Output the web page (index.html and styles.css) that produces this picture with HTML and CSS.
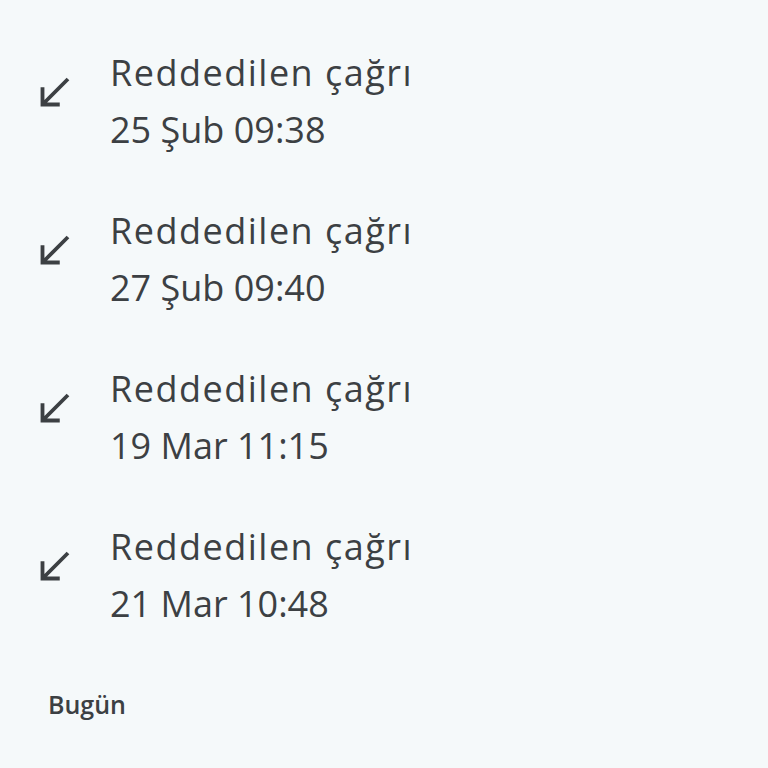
FILE: index.html
```html
<!DOCTYPE html>
<html lang="tr">
<head>
  <meta charset="UTF-8" />
  <meta name="viewport" content="width=device-width, initial-scale=1.0" />
  <title>Arama geçmişi</title>
  <link rel="stylesheet" href="styles.css">
</head>
<body>
  <main class="call-list">
    <div class="call-row">
      <svg class="call-icon" viewBox="0 0 24 24"><path d="M20 5.41L18.59 4 7 15.59V9H5v10h10v-2H8.41z"/></svg>
      <div class="call-text">
        <div class="call-title">Reddedilen çağrı</div>
        <div class="call-time">25 Şub 09:38</div>
      </div>
    </div>
    <div class="call-row">
      <svg class="call-icon" viewBox="0 0 24 24"><path d="M20 5.41L18.59 4 7 15.59V9H5v10h10v-2H8.41z"/></svg>
      <div class="call-text">
        <div class="call-title">Reddedilen çağrı</div>
        <div class="call-time">27 Şub 09:40</div>
      </div>
    </div>
    <div class="call-row">
      <svg class="call-icon" viewBox="0 0 24 24"><path d="M20 5.41L18.59 4 7 15.59V9H5v10h10v-2H8.41z"/></svg>
      <div class="call-text">
        <div class="call-title">Reddedilen çağrı</div>
        <div class="call-time">19 Mar 11:15</div>
      </div>
    </div>
    <div class="call-row">
      <svg class="call-icon" viewBox="0 0 24 24"><path d="M20 5.41L18.59 4 7 15.59V9H5v10h10v-2H8.41z"/></svg>
      <div class="call-text">
        <div class="call-title">Reddedilen çağrı</div>
        <div class="call-time">21 Mar 10:48</div>
      </div>
    </div>

    <h3 class="section-head">Bugün</h3>
  </main>
</body>
</html>
```

FILE: styles.css
```css
body {
  margin: 0;
  padding: 0;
  background: #f5f9fa;
  font-family: "Open Sans", Roboto, sans-serif;
  color: #3c4043;
}

.call-list {
  display: flex;
  flex-direction: column;
  min-height: 100vh;
}

.call-row {
  display: flex;
  align-items: flex-start;
  padding: 44px 0 0 31px;
}

.call-icon {
  width: 46px;
  height: 46px;
  margin-top: 26px;
  margin-right: 33px;
  fill: #3c4043;
  flex-shrink: 0;
}

.call-text {
  display: flex;
  flex-direction: column;
}

.call-title,
.call-time {
  font-size: 36px;
  line-height: 57px;
  white-space: nowrap;
}

.call-title {
  letter-spacing: 1.5px;
}

.section-head {
  margin: 57px 0 0 48px;
  font-size: 25px;
  line-height: 30px;
  font-weight: 600;
}
```
